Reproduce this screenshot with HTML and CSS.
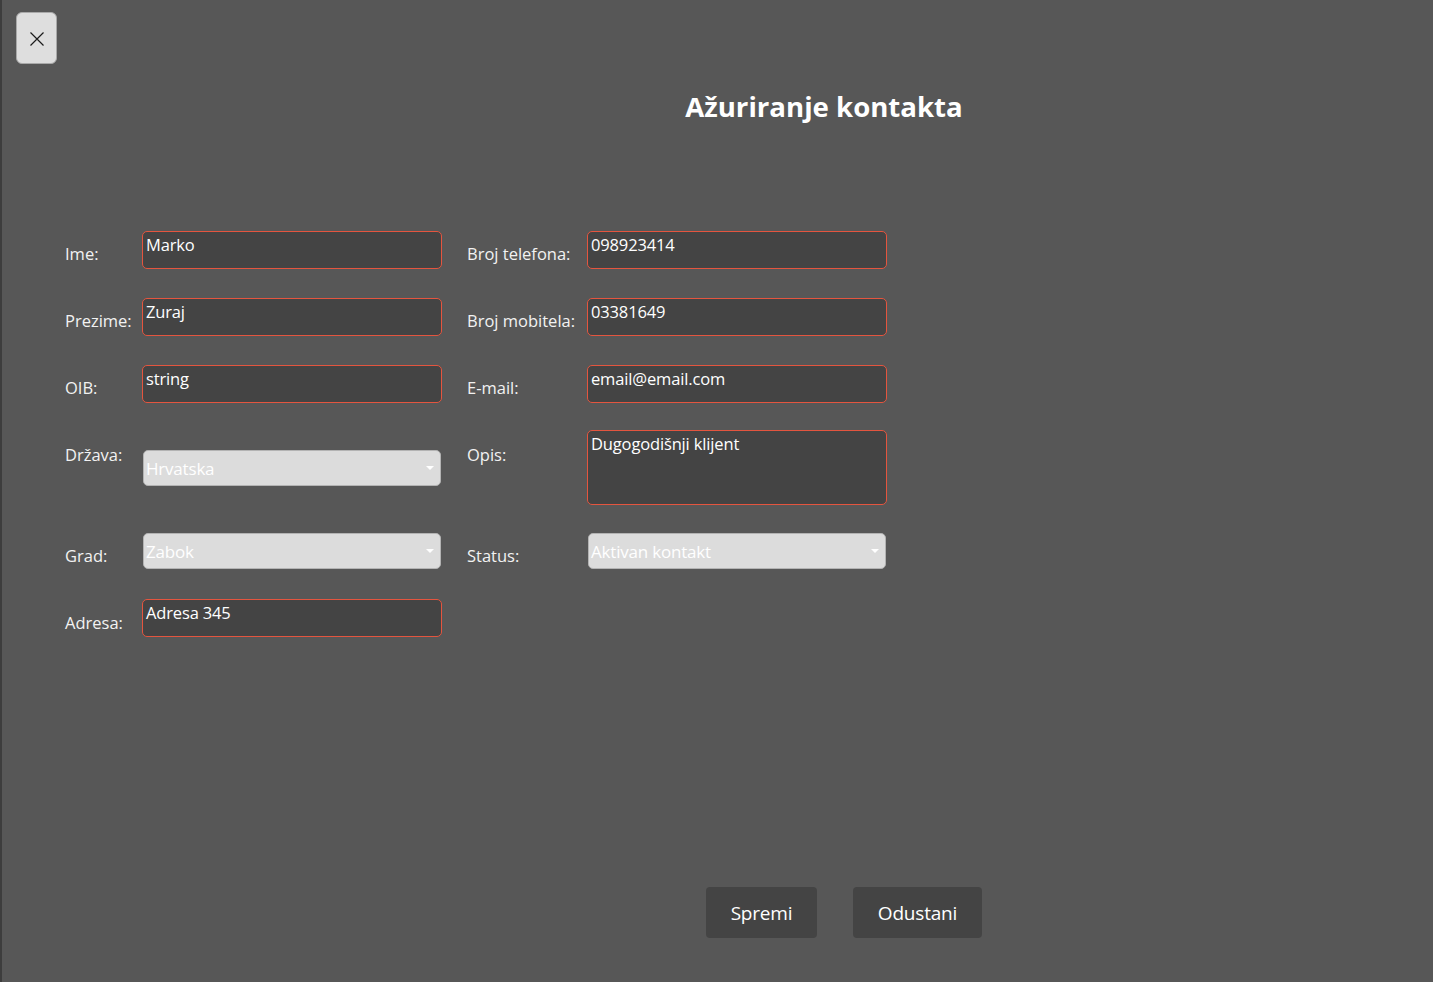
FILE: index.html
```html
<!DOCTYPE html>
<html lang="hr">
<head>
<meta charset="utf-8">
<title>Ažuriranje kontakta</title>
<link rel="stylesheet" href="styles.css">
</head>
<body>
<div class="page">
  <div class="topbar">
    <button class="close-btn" type="button" aria-label="Zatvori">
      <svg width="14" height="14" viewBox="0 0 14 14"><path d="M0.5 0.5 L13.5 13.5 M13.5 0.5 L0.5 13.5" stroke="#1b1b1b" stroke-width="1.2" fill="none"/></svg>
    </button>
  </div>
  <h1 class="title">Ažuriranje kontakta</h1>

  <div class="form">
    <div class="lbl">Ime:</div>
    <div class="field">Marko</div>
    <div class="lbl lbl2">Broj telefona:</div>
    <div class="field">098923414</div>

    <div class="lbl">Prezime:</div>
    <div class="field">Zuraj</div>
    <div class="lbl lbl2">Broj mobitela:</div>
    <div class="field">03381649</div>

    <div class="lbl">OIB:</div>
    <div class="field">string</div>
    <div class="lbl lbl2">E-mail:</div>
    <div class="field">email@email.com</div>

    <div class="lbl lbl-top">Država:</div>
    <div class="select select-low">Hrvatska<span class="caret"></span></div>
    <div class="lbl lbl2 lbl-top">Opis:</div>
    <div class="field area">Dugogodišnji klijent</div>

    <div class="lbl">Grad:</div>
    <div class="select">Zabok<span class="caret"></span></div>
    <div class="lbl lbl2">Status:</div>
    <div class="select">Aktivan kontakt<span class="caret"></span></div>

    <div class="lbl lbl-last">Adresa:</div>
    <div class="field">Adresa 345</div>
  </div>

  <div class="actions">
    <button class="btn btn-save" type="button">Spremi</button>
    <button class="btn btn-cancel" type="button">Odustani</button>
  </div>
</div>
</body>
</html>
```

FILE: styles.css
```css
html, body {
  margin: 0;
  padding: 0;
}
body {
  background: #575757;
  font-family: "Open Sans", "Noto Sans", "Liberation Sans", sans-serif;
  color: #ffffff;
  width: 1433px;
  height: 982px;
  overflow: hidden;
  position: relative;
  box-sizing: border-box;
  border-left: 2px solid #3d3d3d;
}
body::before {
  content: "";
  position: absolute;
  left: -2px;
  top: 221px;
  width: 1px;
  height: 61px;
  background: #6a6a6a;
}
.page {
  padding: 12px 0 0 14px;
}
.topbar {
  display: flex;
}
.close-btn {
  width: 41px;
  height: 52px;
  box-sizing: border-box;
  background: #dedede;
  border: 1px solid #a9a9a9;
  border-radius: 6px;
  padding: 0;
  display: flex;
  align-items: center;
  justify-content: center;
  padding-top: 1px;
}
.title {
  margin: 24px 0 0 0;
  padding-left: 199px;
  text-align: center;
  font-size: 27.6px;
  line-height: 36px;
  font-weight: 700;
  color: #ffffff;
}
.form {
  margin-top: 107px;
  margin-left: 49px;
  display: grid;
  grid-template-columns: 77px 300px 145px 300px;
  grid-template-rows: 67px 67px 65px 103px 66px 38px;
  align-items: start;
  font-size: 16.5px;
}
.lbl {
  margin-top: 12px;
  line-height: 22px;
  color: #f2f2f2;
  white-space: nowrap;
}
.lbl2 {
  padding-left: 25px;
}
.lbl-top {
  margin-top: 14px;
}
.lbl-last {
  margin-top: 13px;
}
.field {
  height: 38px;
  box-sizing: border-box;
  background: #444444;
  border: 1px solid #e4553f;
  border-radius: 5px;
  padding: 1px 3px 0 3px;
  font-size: 16.5px;
  line-height: 23px;
  color: #ffffff;
  letter-spacing: -0.15px;
}
.field.area {
  height: 75px;
}
.select {
  position: relative;
  height: 36px;
  margin: 0 1px;
  box-sizing: border-box;
  background: #dcdcdc;
  border: 1px solid #b3b3b3;
  border-radius: 5px;
  padding: 0 2px;
  font-size: 17px;
  line-height: 36px;
  color: #ffffff;
  letter-spacing: -0.2px;
}
.select-low {
  margin-top: 20px;
}
.caret {
  position: absolute;
  right: 6px;
  top: 15px;
  width: 0;
  height: 0;
  border-left: 4px solid transparent;
  border-right: 4px solid transparent;
  border-top: 4px solid #ffffff;
}
.actions {
  margin-top: 250px;
  padding-left: 690px;
  display: flex;
  gap: 36px;
}
.btn {
  height: 51px;
  background: #444444;
  border: none;
  border-radius: 4px;
  color: #ffffff;
  font-family: "Open Sans", "Noto Sans", "Liberation Sans", sans-serif;
  font-size: 19px;
  padding: 0;
  letter-spacing: -0.2px;
}
.btn-save {
  width: 111px;
}
.btn-cancel {
  width: 129px;
}
```
